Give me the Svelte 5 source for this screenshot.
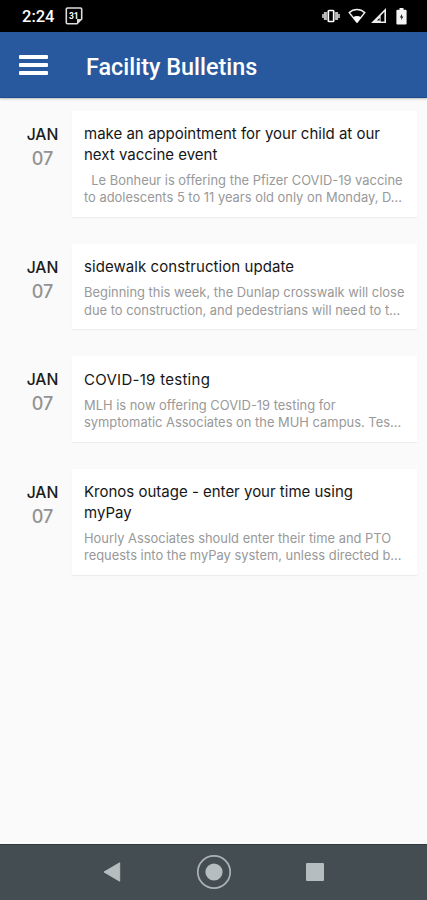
<script>
    const bulletins = [
        {
            id: 1,
            month: 'JAN',
            day: '07',
            title: ['make an appointment for your child at our', 'next vaccine event'],
            text: ['\u00a0 Le Bonheur is offering the Pfizer COVID-19 vaccine', 'to adolescents 5 to 11 years old only on Monday, D...']
        },
        {
            id: 2,
            month: 'JAN',
            day: '07',
            title: ['sidewalk construction update'],
            tracking: 0.07,
            text: ['Beginning this week, the Dunlap crosswalk will close', 'due to construction, and pedestrians will need to t...']
        },
        {
            id: 3,
            month: 'JAN',
            day: '07',
            title: ['COVID-19 testing'],
            tracking: 0.28,
            text: ['MLH is now offering COVID-19 testing for', 'symptomatic Associates on the MUH campus. Tes...']
        },
        {
            id: 4,
            month: 'JAN',
            day: '07',
            title: ['Kronos outage - enter your time using', 'myPay'],
            text: ['Hourly Associates should enter their time and PTO', 'requests into the myPay system, unless directed b...']
        }
    ];
</script>

<div class="screen">
    <div class="status-bar">
        <span class="clock">2:24</span>
        <svg class="calendar" width="18" height="18" viewBox="0 0 18 18">
            <path d="M2.5 1h13a1.2 1.2 0 0 1 1.2 1.2V12L12 16.8H2.5a1.2 1.2 0 0 1-1.2-1.2V2.2A1.2 1.2 0 0 1 2.5 1z" fill="none" stroke="#ddd" stroke-width="1.6" />
            <path d="M16.5 12H12v4.5z" fill="#ddd" />
            <text x="8.8" y="11.8" text-anchor="middle">31</text>
        </svg>
        <div class="status-icons">
            <svg width="18" height="14" viewBox="0 0 18 14">
                <path d="M1 5v4M17 5v4" stroke="#aaa" stroke-width="2" />
                <path d="M3.4 3v8M14.6 3v8" stroke="#bbb" stroke-width="3" />
                <rect x="6.3" y="1.5" width="5.4" height="11" rx=".8" fill="none" stroke="#fff" stroke-width="1.7" />
            </svg>
            <svg width="18" height="16" viewBox="0 0 18 16">
                <path d="M1.2 4.6C5.6.4 12.4.4 16.8 4.6L9 14.2z" fill="none" stroke="#eee" stroke-width="1.5" stroke-linejoin="round" />
                <path d="M5.2 9.2c2.2-1.5 5.4-1.5 7.6 0L9 14.5z" fill="#fff" />
            </svg>
            <svg class="signal" width="16" height="16" viewBox="0 0 16 16">
                <path d="M2 14.2H14.2V2z" fill="none" stroke="#eee" stroke-width="1.6" />
                <path d="M1.5 14.8L9.6 6.7v8.1z" fill="#eee" />
                <path d="M6 12.6l2.6-2.6v2.6z" fill="#000" />
            </svg>
            <svg class="battery" width="11" height="17" viewBox="0 0 11 17">
                <path d="M3.5 0h4v1.8H9.6a1 1 0 0 1 1 1V15.6a1 1 0 0 1-1 1H1.4a1 1 0 0 1-1-1V2.8a1 1 0 0 1 1-1H3.5z" fill="#f4f4f4" />
                <path d="M6 6L3.8 9.6h1.5v2.6L7.4 8.6H6z" fill="#222" />
            </svg>
        </div>
    </div>

    <header class="toolbar">
        <button class="menu" aria-label="Menu">
            <span></span>
            <span></span>
            <span></span>
        </button>
        <h1>Facility Bulletins</h1>
    </header>

    <main>
        {#each bulletins as bulletin (bulletin.id)}
            <article>
                <div class="date">
                    <div class="month">{bulletin.month}</div>
                    <div class="day">{bulletin.day}</div>
                </div>
                <div class="card">
                    <h2 style="letter-spacing: {bulletin.tracking ?? 0}px;">
                        {#each bulletin.title as line}
                            <span>{line}</span>
                        {/each}
                    </h2>
                    <p>
                        {#each bulletin.text as line}
                            <span>{line}</span>
                        {/each}
                    </p>
                </div>
            </article>
        {/each}
    </main>

    <nav class="nav-bar">
        <svg width="18" height="20" viewBox="0 0 18 20">
            <path d="M1 10L16.7.8v18.4z" fill="#b5bdbe" stroke="#b5bdbe" stroke-linejoin="round" />
        </svg>
        <svg width="36" height="36" viewBox="0 0 36 36">
            <circle cx="18" cy="18" r="16.2" fill="none" stroke="#adb4b6" stroke-width="1.7" />
            <circle cx="18" cy="18" r="8.6" fill="#b5bdbe" />
        </svg>
        <svg width="18" height="18" viewBox="0 0 18 18">
            <rect width="18" height="18" rx="1" fill="#b5bdbe" />
        </svg>
    </nav>
</div>

<style>
    :global(body) {
        margin: 0;
    }

    .screen {
        display: flex;
        flex-direction: column;
        width: 427px;
        height: 900px;
        overflow: hidden;
        background: #fafafa;
        font-family: Inter, "Liberation Sans", sans-serif;
    }

    .status-bar {
        display: flex;
        align-items: center;
        box-sizing: border-box;
        height: 32px;
        padding: 0 20px 0 22px;
        background: #000;
        color: #fff;
        flex-shrink: 0;
    }

    .clock {
        width: 33px;
        font: 500 16.5px/32px Roboto, sans-serif;
        padding-top: 1px;
        white-space: nowrap;
    }

    .calendar {
        margin-left: 10px;
    }

    .calendar text {
        font: 700 8.5px Roboto, sans-serif;
        fill: #fff;
    }

    .status-icons {
        display: flex;
        align-items: center;
        margin-left: auto;
        gap: 8px;
    }

    .signal {
        margin-left: -3px;
    }

    .battery {
        margin-left: 1px;
    }

    .toolbar {
        display: flex;
        align-items: center;
        box-sizing: border-box;
        height: 66px;
        padding-left: 19px;
        background: #28599e;
        border-bottom: 1px solid #1b4c89;
        box-shadow: 0 1px 2px rgba(0, 0, 0, 0.25);
        flex-shrink: 0;
    }

    .menu {
        display: flex;
        flex-direction: column;
        gap: 4px;
        width: 29px;
        padding: 1px 0 0;
        border: 0;
        background: none;
    }

    .menu span {
        height: 4px;
        border-radius: 1px;
        background: #fff;
    }

    h1 {
        margin: 4px 0 0 38px;
        color: #fff;
        font: 500 23.4px/30px Roboto, sans-serif;
        white-space: nowrap;
    }

    main {
        display: flex;
        flex-direction: column;
        flex: 1;
        gap: 27px;
        padding-top: 12.5px;
    }

    article {
        display: flex;
    }

    .date {
        box-sizing: border-box;
        width: 72px;
        padding: 12px 0 0 13px;
        text-align: center;
    }

    .month {
        color: #1c1c1c;
        font-size: 15.7px;
        font-weight: 500;
        line-height: 24px;
    }

    .day {
        color: #929292;
        font-size: 18px;
        font-weight: 500;
        line-height: 23.5px;
    }

    .card {
        box-sizing: border-box;
        width: 345px;
        padding: 13.5px 12px 10px;
        background: #fff;
        box-shadow: 0 1px 1px rgba(0, 0, 0, 0.05);
    }

    h2,
    p {
        margin: 0;
        white-space: nowrap;
    }

    h2 span,
    p span {
        display: block;
    }

    h2 {
        color: #161616;
        font-size: 15px;
        font-weight: 400;
        line-height: 20.5px;
    }

    p {
        margin-top: 6.5px;
        color: #999;
        font-size: 12.92px;
        line-height: 17.5px;
    }

    .nav-bar {
        display: flex;
        align-items: center;
        box-sizing: border-box;
        height: 56px;
        padding: 0 0 1px 103px;
        gap: 75px;
        background: #444d51;
        border-top: 1px solid #303a3e;
        flex-shrink: 0;
    }

    .nav-bar svg:last-child {
        margin-left: -1px;
    }
</style>
